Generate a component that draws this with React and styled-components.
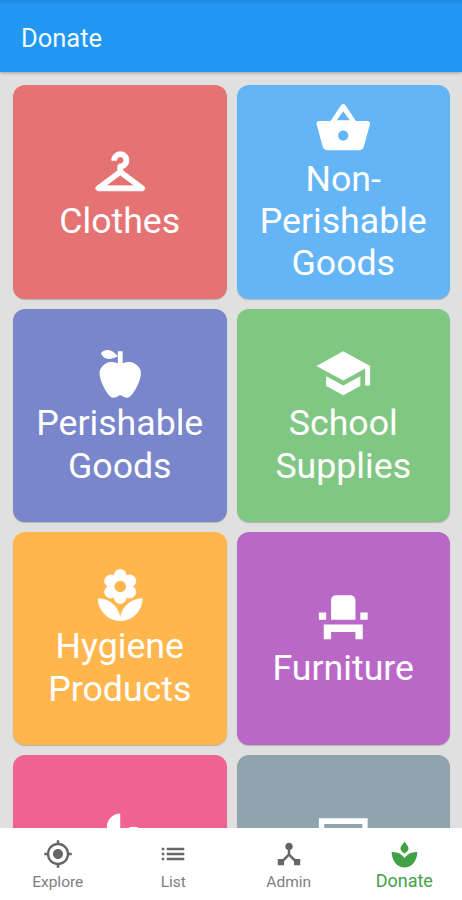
import React from 'react'
import styled, { createGlobalStyle } from 'styled-components'
// icons
import { MdGpsFixed, MdList, MdDeviceHub, MdSchool, MdEventSeat, MdLocalFlorist, MdCheckroom } from 'react-icons/md'

const BasketIcon = () => (
    <svg viewBox="0 0 24 24" fill="currentColor">
        <path d="M17.21 9l-4.38-6.56c-.19-.28-.51-.42-.83-.42s-.64.14-.83.43L6.79 9H2c-.55 0-1 .45-1 1 0 .09.01.18.04.27l2.54 9.27c.23.84 1 1.46 1.92 1.46h13c.92 0 1.69-.62 1.93-1.46l2.54-9.27L23 10c0-.55-.45-1-1-1h-4.79zM9.3 8.7L12 5l2.7 3.7H9.3zM12 17.1c-1.1 0-2.100-.9-2.100-2.100s1-2.100 2.100-2.100 2.100.9 2.100 2.100-1 2.100-2.100 2.100z" />
    </svg>
)

const AppleIcon = () => (
    <svg viewBox="0 0 24 24" fill="currentColor">
        <path d="M20 10c2 3-3 12-5 12s-2-1-3-1-1 1-3 1S2 13 4 10s5-3 7-2V5C5.38 8.07 4.11 3.78 4.11 3.78S6.77.19 11 5V3h2v5c2-1 5-1 7 2z" />
    </svg>
)

const FanIcon = () => (
    <svg viewBox="0 0 24 24" fill="currentColor">
        <path d="M12 12c0-3 2.5-5.5 5.5-5.5S23 9 23 12H12zm0 0c0 3-2.5 5.5-5.5 5.5S1 15 1 12h11zm0 0c-3 0-5.5-2.5-5.5-5.5S9 1 12 1v11zm0 0c3 0 5.5 2.5 5.5 5.5S15 23 12 23V12z" />
    </svg>
)

const ScreenIcon = () => (
    <svg viewBox="0 0 24 24" fill="currentColor">
        <path d="M2 3h20v15h-7v2h2v2H7v-2h2v-2H2V3zm2.2 2.3v10.7h15.6V5.3H4.2z" />
    </svg>
)

const SproutIcon = () => (
    <svg viewBox="0 0 24 24" fill="currentColor">
        <path d="M12 .6c1.6 2.200 3.600 3.900 3.600 6.100 0 1.800-1.700 3.100-3.600 4.500-1.900-1.400-3.600-2.700-3.600-4.500 0-2.200 2-3.900 3.600-6.100z" />
        <path d="M.6 9.8c4.900-.3 8.900 1.500 11.400 5.300 2.500-3.800 6.500-5.600 11.400-5.300C23.200 17.600 18.600 23.600 12 23.600S.8 17.600.6 9.800z" />
    </svg>
)

const categories = [
    { id: 'clothes', label: 'Clothes', color: '#e57373', icon: <MdCheckroom />, weight: 0.4 },
    { id: 'non-perishable', label: 'Non-Perishable Goods', color: '#64b5f6', icon: <BasketIcon /> },
    { id: 'perishable', label: 'Perishable Goods', color: '#7986cb', icon: <AppleIcon /> },
    { id: 'school', label: 'School Supplies', color: '#81c784', icon: <MdSchool /> },
    { id: 'hygiene', label: 'Hygiene Products', color: '#ffb74d', icon: <MdLocalFlorist />, weight: 0.3 },
    { id: 'furniture', label: 'Furniture', color: '#ba68c8', icon: <MdEventSeat /> },
    { id: 'fan', color: '#f06292', icon: <FanIcon /> },
    { id: 'screen', color: '#90a4ae', icon: <ScreenIcon /> },
]

const tabs = [
    { label: 'Explore', icon: <MdGpsFixed /> },
    { label: 'List', icon: <MdList /> },
    { label: 'Admin', icon: <MdDeviceHub /> },
    { label: 'Donate', icon: <SproutIcon />, active: true },
]

/**
 * Donate screen: category tiles between the app bar and the bottom tabs
 */
const App = () => {
    return (
        <>
            <GlobalStyle />
            <Screen>
                <AppBar>
                    <h1>Donate</h1>
                </AppBar>
                <Grid>
                    {categories.map(({ id, label, color, icon, weight }) => (
                        <Tile key={id} $color={color} $weight={weight}>
                            {icon}
                            <TileLabel>{label}</TileLabel>
                        </Tile>
                    ))}
                </Grid>
                <BottomNav>
                    {tabs.map(({ label, icon, active }) => (
                        <Tab key={label} $active={active}>
                            {icon}
                            <span>{label}</span>
                        </Tab>
                    ))}
                </BottomNav>
            </Screen>
        </>
    )
}
export default App

/**
 * Styled components
 */
const GlobalStyle = createGlobalStyle`
    * {
        box-sizing: border-box;
    }

    body {
        margin: 0;
        font-family: Roboto, sans-serif;
    }
`

const Screen = styled.div`
    display: flex;
    flex-direction: column;
    width: 462px;
    height: 900px;
    overflow: hidden;
    background: #e0e0e0;
`

const AppBar = styled.header`
    display: flex;
    flex: none;
    align-items: center;
    height: 72px;
    padding: 3px 21px 0;
    color: #f1faff;
    background: linear-gradient(#1e88e0, #2196f3 4px);
    box-shadow: 0 1px 3px rgba(0, 0, 0, 0.3);

    h1 {
        margin: 0;
        font-size: 25.5px;
        font-weight: 400;
    }
`

const Grid = styled.main`
    display: grid;
    flex: 1;
    grid-template-columns: 213.5px 213.5px;
    grid-auto-rows: 213.3px;
    gap: 10px;
    min-height: 0;
    padding: 13.4px 0 0 13px;
    overflow: hidden;
`

const Tile = styled.section`
    display: flex;
    flex-direction: column;
    align-items: center;
    justify-content: center;
    border-radius: 12px;
    color: #fff;
    background: ${({ $color }) => $color};
    box-shadow: 0 1px 1px rgba(0, 0, 0, 0.2);

    svg {
        flex: none;
        width: 58.5px;
        height: 58.5px;
        stroke-width: ${({ $weight }) => $weight || 0};
    }

    /* the icon set adds an empty bounding path that must stay unstroked */
    svg path[fill='none'] {
        stroke: none;
    }
`

const TileLabel = styled.span`
    width: 180px;
    min-height: 42.4px;
    font-size: 35.7px;
    line-height: 42.4px;
    text-align: center;
`

const BottomNav = styled.nav`
    display: flex;
    flex: none;
    height: 72px;
    background: #fff;
`

const Tab = styled.div`
    display: flex;
    flex: 1;
    flex-direction: column;
    align-items: center;
    padding-top: ${({ $active }) => ($active ? '13px' : '11px')};
    color: ${({ $active }) => ($active ? '#43a047' : '#666')};

    svg {
        width: ${({ $active }) => ($active ? '27px' : '30px')};
        height: ${({ $active }) => ($active ? '27px' : '30px')};
    }

    span {
        margin-top: 3px;
        color: ${({ $active }) => ($active ? '#43a047' : '#808080')};
        font-size: ${({ $active }) => ($active ? '18px' : '15.5px')};
        line-height: 20px;
    }
`
